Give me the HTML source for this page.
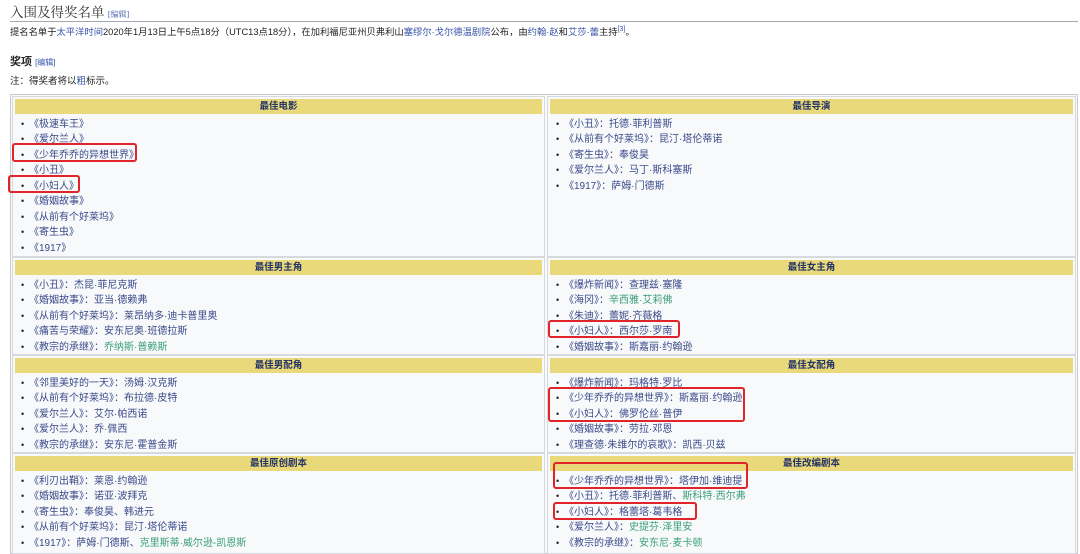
<!DOCTYPE html>
<html><head><meta charset="utf-8"><style>
*{margin:0;padding:0;box-sizing:border-box}
body{width:1080px;height:554px;overflow:hidden;background:#fff;font-family:"Liberation Sans","Noto Sans CJK SC",sans-serif;color:#222;font-size:10px;position:relative}
.a{position:absolute;white-space:nowrap}
.b{color:#3a55a8}
.g{color:#3a9f78}
.e{font-size:8px;color:#3a55a8}
.tbl{position:absolute;left:10px;top:94px;width:1068px;height:460px;border:1px solid #c8ccd1;background:#f8f9fa}
.cell{position:absolute;border:1px solid #d6d9de;background:#f8f9fa}
.hd{position:absolute;left:2px;right:2px;top:2px;height:15px;background:#ead97a;text-align:center;font-weight:bold;font-size:9.5px;line-height:15px;color:#223366}
ul{position:absolute;left:8px;top:19.5px;list-style:none;line-height:15.5px;font-size:10px;color:#3a4a8a}
li::before{content:"•";color:#222;display:inline-block;width:8px;font-size:9px}
.box{position:absolute;border:2px solid #e0252a;border-radius:3px}
</style></head><body>
<div class="a" style="left:10px;top:1px;font-size:13.5px;color:#333;font-family:'Liberation Serif','Noto Serif CJK SC',serif">入围及得奖名单 <span class="e">[编辑]</span></div>
<div style="position:absolute;left:10px;right:2px;top:21px;border-top:1px solid #a2a9b1"></div>
<div class="a" style="left:10px;top:24px;font-size:9.3px">提名名单于<span class="b">太平洋时间</span>2020年1月13日上午5点18分（UTC13点18分），在加利福尼亚州贝弗利山<span class="b">塞缪尔·戈尔德温剧院</span>公布，由<span class="b">约翰·赵</span>和<span class="b">艾莎·蕾</span>主持<sup class="b" style="font-size:7px">[3]</sup>。</div>
<div class="a" style="left:10px;top:53px;font-weight:bold;font-size:11px">奖项 <span class="e" style="font-weight:normal">[编辑]</span></div>
<div class="a" style="left:10px;top:73px;font-size:9.5px">注：得奖者将以<span class="b">粗</span>标示。</div>
<div class="tbl">
<div class="cell" style="left:1px;top:1px;width:533px;height:161px"><div class="hd">最佳电影</div><ul><li>《极速车王》</li><li>《爱尔兰人》</li><li>《少年乔乔的异想世界》</li><li>《小丑》</li><li>《小妇人》</li><li>《婚姻故事》</li><li>《从前有个好莱坞》</li><li>《寄生虫》</li><li>《1917》</li></ul></div>
<div class="cell" style="left:536px;top:1px;width:529px;height:161px"><div class="hd">最佳导演</div><ul><li>《小丑》：托德·菲利普斯</li><li>《从前有个好莱坞》：昆汀·塔伦蒂诺</li><li>《寄生虫》：奉俊昊</li><li>《爱尔兰人》：马丁·斯科塞斯</li><li>《1917》：萨姆·门德斯</li></ul></div>
<div class="cell" style="left:1px;top:162px;width:533px;height:98px"><div class="hd">最佳男主角</div><ul><li>《小丑》：杰昆·菲尼克斯</li><li>《婚姻故事》：亚当·德赖弗</li><li>《从前有个好莱坞》：莱昂纳多·迪卡普里奥</li><li>《痛苦与荣耀》：安东尼奥·班德拉斯</li><li>《教宗的承继》：<span class="g">乔纳斯·普赖斯</span></li></ul></div>
<div class="cell" style="left:536px;top:162px;width:529px;height:98px"><div class="hd">最佳女主角</div><ul><li>《爆炸新闻》：查理兹·塞隆</li><li>《海冈》：<span class="g">辛西雅·艾莉佛</span></li><li>《朱迪》：蕾妮·齐薇格</li><li>《小妇人》：西尔莎·罗南</li><li>《婚姻故事》：斯嘉丽·约翰逊</li></ul></div>
<div class="cell" style="left:1px;top:260px;width:533px;height:98px"><div class="hd">最佳男配角</div><ul><li>《邻里美好的一天》：汤姆·汉克斯</li><li>《从前有个好莱坞》：布拉德·皮特</li><li>《爱尔兰人》：艾尔·帕西诺</li><li>《爱尔兰人》：乔·佩西</li><li>《教宗的承继》：安东尼·霍普金斯</li></ul></div>
<div class="cell" style="left:536px;top:260px;width:529px;height:98px"><div class="hd">最佳女配角</div><ul><li>《爆炸新闻》：玛格特·罗比</li><li>《少年乔乔的异想世界》：斯嘉丽·约翰逊</li><li>《小妇人》：佛罗伦丝·普伊</li><li>《婚姻故事》：劳拉·邓恩</li><li>《理查德·朱维尔的哀歌》：凯西·贝兹</li></ul></div>
<div class="cell" style="left:1px;top:358px;width:533px;height:101px"><div class="hd">最佳原创剧本</div><ul><li>《利刃出鞘》：莱恩·约翰逊</li><li>《婚姻故事》：诺亚·波拜克</li><li>《寄生虫》：奉俊昊、韩进元</li><li>《从前有个好莱坞》：昆汀·塔伦蒂诺</li><li>《1917》：萨姆·门德斯、<span class="g">克里斯蒂·威尔逊-凯恩斯</span></li></ul></div>
<div class="cell" style="left:536px;top:358px;width:529px;height:101px"><div class="hd">最佳改编剧本</div><ul><li>《少年乔乔的异想世界》：塔伊加·维迪提</li><li>《小丑》：托德·菲利普斯、<span class="g">斯科特·西尔弗</span></li><li>《小妇人》：格蕾塔·葛韦格</li><li>《爱尔兰人》：<span class="g">史提芬·泽里安</span></li><li>《教宗的承继》：<span class="g">安东尼·麦卡顿</span></li></ul></div>
</div>
<div class="box" style="left:12px;top:143px;width:125px;height:19px"></div>
<div class="box" style="left:8px;top:175px;width:72px;height:18px"></div>
<div class="box" style="left:548px;top:320px;width:132px;height:18px"></div>
<div class="box" style="left:548px;top:387px;width:197px;height:35px"></div>
<div class="box" style="left:553px;top:462px;width:195px;height:27px"></div>
<div class="box" style="left:553px;top:502px;width:144px;height:18px"></div>
</body></html>
